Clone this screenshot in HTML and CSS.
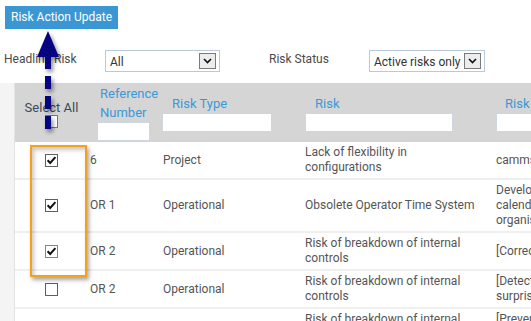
FILE: index.html
```html
<!DOCTYPE html>
<html lang="en">
<head>
<meta charset="utf-8">
<title>Risk Action Update</title>
<link rel="stylesheet" href="styles.css">
</head>
<body>
<div class="page">
  <div class="toolbar">
    <button class="btn-primary" type="button">Risk Action Update</button>
  </div>

  <div class="filters">
    <span class="filter-label label-headline">Headline Risk</span>
    <div class="select select-headline">
      <span class="select-value">All</span>
      <span class="select-btn"><svg width="9" height="6" viewBox="0 0 9 6"><polyline points="1,1 4.5,4.5 8,1" fill="none" stroke="#111" stroke-width="1.6"/></svg></span>
    </div>
    <span class="filter-label label-status">Risk Status</span>
    <div class="select select-status">
      <span class="select-value">Active risks only</span>
      <span class="select-btn"><svg width="9" height="6" viewBox="0 0 9 6"><polyline points="1,1 4.5,4.5 8,1" fill="none" stroke="#111" stroke-width="1.6"/></svg></span>
    </div>
  </div>

  <div class="main">
    <div class="side-strip"></div>
    <div class="table-wrap">
      <div class="thead cols">
        <div class="th th-check">
          <span class="th-label">Select All</span>
          <span class="cb cb-header"></span>
        </div>
        <div class="th th-ref">
          <span class="th-label">Reference<br>Number</span>
          <input class="col-filter" type="text">
        </div>
        <div class="th th-type">
          <span class="th-label">Risk Type</span>
          <input class="col-filter" type="text">
        </div>
        <div class="th th-risk">
          <span class="th-label">Risk</span>
          <input class="col-filter" type="text">
        </div>
        <div class="th th-last">
          <span class="th-label">Risk Action</span>
          <input class="col-filter" type="text">
        </div>
      </div>

      <div class="row cols">
        <div class="td td-check"><span class="cb"><svg viewBox="0 0 13 13"><path d="M2.6 6.3 L5.2 9 L10.4 3.2" fill="none" stroke="#111" stroke-width="2"/></svg></span></div>
        <div class="td td-ref">6</div>
        <div class="td td-type">Project</div>
        <div class="td td-risk">Lack of flexibility in configurations</div>
        <div class="td td-last">cammsrisk configuration review</div>
      </div>

      <div class="row cols">
        <div class="td td-check"><span class="cb"><svg viewBox="0 0 13 13"><path d="M2.6 6.3 L5.2 9 L10.4 3.2" fill="none" stroke="#111" stroke-width="2"/></svg></span></div>
        <div class="td td-ref">OR 1</div>
        <div class="td td-type">Operational</div>
        <div class="td td-risk">Obsolete Operator Time System</div>
        <div class="td td-last">Develop a new<br>calendar system for the<br>organisation</div>
      </div>

      <div class="row cols">
        <div class="td td-check"><span class="cb cb-focus"><svg viewBox="0 0 13 13"><path d="M2.6 6.3 L5.2 9 L10.4 3.2" fill="none" stroke="#111" stroke-width="2"/></svg></span></div>
        <div class="td td-ref">OR 2</div>
        <div class="td td-type">Operational</div>
        <div class="td td-risk">Risk of breakdown of internal controls</div>
        <div class="td td-last">[Corrective] Review controls</div>
      </div>

      <div class="row cols">
        <div class="td td-check"><span class="cb"></span></div>
        <div class="td td-ref">OR 2</div>
        <div class="td td-type">Operational</div>
        <div class="td td-risk">Risk of breakdown of internal controls</div>
        <div class="td td-last">[Detective] Conduct<br>surprise audits</div>
      </div>

      <div class="row cols">
        <div class="td td-check"><span class="cb"></span></div>
        <div class="td td-ref">OR 2</div>
        <div class="td td-type">Operational</div>
        <div class="td td-risk">Risk of breakdown of internal controls</div>
        <div class="td td-last">[Preventive] Segregate<br>duties</div>
      </div>
    </div>
  </div>

  <div class="annot-box"></div>
  <svg class="annot-arrow" viewBox="0 0 100 160" width="100" height="160">
    <line x1="48" y1="56" x2="48" y2="136" stroke="#05057f" stroke-width="6" stroke-dasharray="13 7"/>
    <polygon points="48,31 37,57 59,57" fill="#05057f"/>
  </svg>
</div>
</body>
</html>
```

FILE: styles.css
```css
* { box-sizing: border-box; }

html, body {
  margin: 0;
  padding: 0;
  background: #ffffff;
}

body {
  font-family: Roboto, "Liberation Sans", Arial, sans-serif;
  color: #555555;
}

.page {
  position: relative;
  width: 531px;
  height: 321px;
  overflow: hidden;
}

/* ---------- toolbar ---------- */
.toolbar {
  padding: 6px 0 0 5px;
  height: 29px;
}

.btn-primary {
  display: block;
  height: 23px;
  padding: 0 6px;
  border: none;
  border-radius: 0;
  background: #3a97d4;
  color: #ffffff;
  font-family: Roboto, "Liberation Sans", Arial, sans-serif;
  font-size: 12px;
  line-height: 23px;
}

/* ---------- filters ---------- */
.filters {
  display: flex;
  align-items: center;
  height: 22px;
  margin-top: 21px;
  padding-left: 4px;
}

.filter-label {
  align-self: flex-start;
  font-size: 12px;
  line-height: 18px;
  color: #4a4a4a;
}

.label-headline { width: 101px; }
.label-status { width: 100px; margin-left: 49px; }

.select {
  display: flex;
  align-items: center;
  justify-content: space-between;
  height: 22px;
  border: 1px solid #b9c9d9;
  background: #ffffff;
  padding: 0 3px 0 4px;
}

.select-headline { width: 115px; }
.select-status { width: 116px; }

.select-value {
  font-size: 12px;
  color: #333333;
  line-height: 18px;
  padding-top: 2px;
}

.select-btn {
  display: flex;
  align-items: center;
  justify-content: center;
  width: 17px;
  height: 16px;
  border: 1px solid #7a7a7a;
  background: #ececec;
}

/* ---------- main / table ---------- */
.main {
  display: flex;
  margin-top: 11px;
  height: 238px;
}

.side-strip {
  flex: 0 0 15px;
  background: #f4f4f4;
  border-right: 1px solid #e3e3e3;
}

.table-wrap {
  flex: 1 1 auto;
  overflow: hidden;
}

.cols {
  display: grid;
  grid-template-columns: 73px 72px 140px 191px 220px;
  width: 696px;
}

.thead {
  height: 59px;
  background: #d5d5d5;
}

.th {
  display: flex;
  flex-direction: column;
  justify-content: center;
  font-size: 13px;
  line-height: 19px;
  color: #3a99d8;
}

.th-label { display: block; }

.th-check {
  align-items: center;
  color: #3a4a5b;
}

.th-ref { padding-left: 9px; }
.th-ref .th-label { padding-left: 3px; }
.th-ref .col-filter { width: 53px; }

.th-type { padding-left: 2px; }
.th-type .th-label { padding-left: 10px; }
.th-type .col-filter { width: 110px; }

.th-risk { padding-left: 5px; }
.th-risk .th-label { padding-left: 10px; }
.th-risk .col-filter { width: 148px; }

.th-last { padding-left: 5px; }
.th-last .th-label { padding-left: 9px; white-space: nowrap; }
.th-last .col-filter { width: 200px; }

.col-filter {
  display: block;
  height: 19px;
  margin: 0;
  padding: 0 3px;
  border: 1px solid #cdd7e1;
  background: #ffffff;
  border-radius: 0;
  outline: none;
}

.row {
  align-items: center;
  border-bottom: 2px solid #efefef;
  background: #ffffff;
}

.td {
  padding: 3px 0;
  font-size: 12px;
  line-height: 15px;
  color: #555555;
}

.td-check {
  display: flex;
  justify-content: center;
}

.td-ref { padding-left: 2px; }
.td-type { padding-left: 3px; }
.td-risk { padding-left: 5px; padding-right: 6px; }
.td-last { padding-left: 5px; white-space: nowrap; }

/* ---------- checkboxes ---------- */
.cb {
  display: block;
  width: 13px;
  height: 13px;
  border: 1px solid #5f5f5f;
  background: #ffffff;
  position: relative;
}

.cb svg {
  position: absolute;
  left: -1px;
  top: -1px;
  width: 13px;
  height: 13px;
}

.cb-header {
  margin-top: -2px;
  border-color: #777777;
}

.cb-focus { border-color: #3a98f0; }

/* ---------- annotations (overlay) ---------- */
.annot-box {
  position: absolute;
  left: 30px;
  top: 145px;
  width: 57px;
  height: 132px;
  border: 2px solid #f5a11c;
  box-shadow: 2px 3px 4px rgba(0, 0, 0, 0.35), inset 2px 3px 4px rgba(0, 0, 0, 0.22);
  pointer-events: none;
}

.annot-arrow {
  position: absolute;
  left: 0;
  top: 0;
  pointer-events: none;
  filter: drop-shadow(2px 3px 2px rgba(0, 0, 0, 0.45));
}
```
